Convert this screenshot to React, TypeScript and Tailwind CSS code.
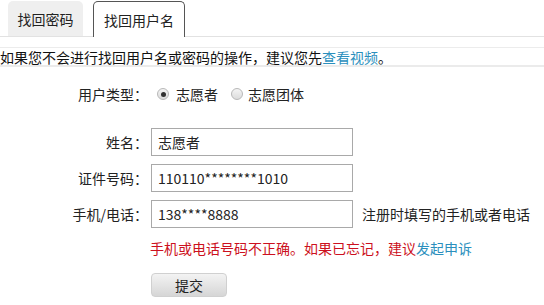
import React from 'react';

const font = { fontFamily: "'Noto Sans CJK SC', 'Liberation Sans', sans-serif" };

function Radio({ checked }: { checked?: boolean }) {
    return (
        <span className="w-[12px] h-[12px] rounded-full border border-[#b8b8b8] bg-gradient-to-b from-[#f4f4f4] to-[#dcdcdc] flex items-center justify-center">
            {checked && <span className="w-[5px] h-[5px] rounded-full bg-[#333]" />}
        </span>
    );
}

function Field({ label, value, hint }: { label: string; value: string; hint?: string }) {
    return (
        <div className="flex items-center h-[28px]">
            <div className="w-[151px] text-right pr-[3px] text-[14px] text-[#222]">{label}</div>
            <div className="w-[202px] h-[28px] border border-[#a9a9a9] px-[6px] flex items-center text-[14px] text-[#222]">{value}</div>
            {hint && <div className="ml-[9px] text-[14px] text-[#222]">{hint}</div>}
        </div>
    );
}

export default function App() {
    return (
        <div className="w-[544px] h-[305px] bg-white overflow-hidden leading-[18px]" style={font}>
            {/* Tabs */}
            <div className="flex items-end h-[37px] pl-[8px] gap-[10px] border-b border-[#e2e2e2]">
                <div className="w-[75px] h-[35px] rounded-t-[5px] bg-[#efefef] flex items-center justify-center text-[14px] text-[#222]">找回密码</div>
                <div className="w-[92px] h-[36px] -mb-px rounded-t-[5px] border border-b-0 border-[#555] bg-white flex items-center justify-center text-[14px] text-[#222]">找回用户名</div>
            </div>

            {/* Notice */}
            <div className="mt-[10px] border-t border-[#ececec] border-b-2 border-b-[#ebebeb] h-[20px] flex items-center text-[14px] text-[#111]">
                如果您不会进行找回用户名或密码的操作，建议您先<span className="text-[#2b8fbd]">查看视频</span>。
            </div>

            {/* Form */}
            <div className="flex items-center h-[20px] mt-[17px]">
                <div className="w-[151px] text-right pr-[3px] text-[14px] text-[#222]">用户类型：</div>
                <div className="flex items-center ml-[6px] text-[14px] text-[#222]">
                    <Radio checked />
                    <span className="ml-[7px]">志愿者</span>
                    <span className="ml-[13px]"><Radio /></span>
                    <span className="ml-[5px]">志愿团体</span>
                </div>
            </div>

            <div className="flex flex-col gap-[8px] mt-[24px]">
                <Field label="姓名：" value="志愿者" />
                <Field label="证件号码：" value="110110********1010" />
                <Field label="手机/电话：" value="138****8888" hint="注册时填写的手机或者电话" />
            </div>

            <div className="ml-[150px] mt-[11px] h-[18px] text-[14px] text-[#cc1020]">
                手机或电话号码不正确。如果已忘记，建议<span className="text-[#2b8fbd]">发起申诉</span>
            </div>

            <button className="ml-[151px] mt-[16px] w-[76px] h-[24px] rounded-[4px] border border-[#d0d0d0] bg-gradient-to-b from-[#f3f3f3] to-[#d6d6d6] text-[14px] text-[#222] flex items-center justify-center">
                提交
            </button>
        </div>
    );
}
